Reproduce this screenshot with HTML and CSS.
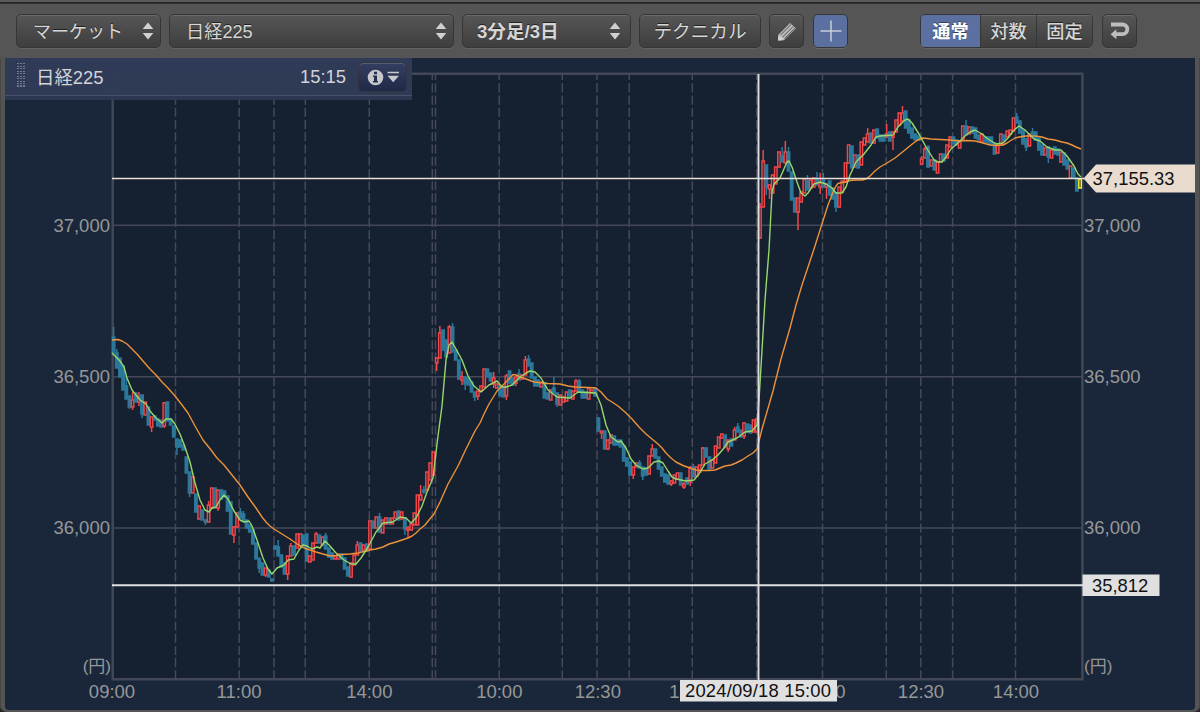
FILE: index.html
```html
<!DOCTYPE html>
<html lang="ja">
<head>
<meta charset="utf-8">
<title>日経225</title>
<link rel="stylesheet" href="styles.css">
</head>
<body>
<div class="window">
  <header class="toolbar">
    <button class="btn select market"><span>マーケット</span><svg class="arrows" width="12" height="18" viewBox="0 0 12 18"><path d="M6 0.5L11.3 7H.7zM.7 11H11.3L6 17.5z"/></svg></button>
    <button class="btn select symbol"><span>日経225</span><svg class="arrows" width="12" height="18" viewBox="0 0 12 18"><path d="M6 0.5L11.3 7H.7zM.7 11H11.3L6 17.5z"/></svg></button>
    <button class="btn select span"><span>3分足/3日</span><svg class="arrows" width="12" height="18" viewBox="0 0 12 18"><path d="M6 0.5L11.3 7H.7zM.7 11H11.3L6 17.5z"/></svg></button>
    <button class="btn technical"><span>テクニカル</span></button>
    <button class="btn square"><svg width="22" height="22" viewBox="0 0 22 22"><path d="M2 20.500L2.600 14.500 14.200 3 20 8.600 8.200 20z" fill="#bcbcbc"/><path d="M4.600 14.900L15.400 4.200M6.700 17L17.400 6.300M8.600 18.600L19 8.200" stroke="#4a4a4a" stroke-width="1"/><path d="M2 20.500l.5-5.200L7.500 20.200z" fill="#d2d2d2"/></svg></button>
    <button class="btn square plus active"><svg width="22" height="22" viewBox="0 0 22 22"><path d="M11 .5V21.500M.5 11H21.500" stroke="#c9cdd6" stroke-width="1.5"/></svg></button>
    <div class="segment"><button class="active"><span>通常</span></button><button><span>対数</span></button><button><span>固定</span></button></div>
    <button class="btn square"><svg width="22" height="22" viewBox="0 0 22 22"><path d="M2 4.500H13.500A4.800 4.800 0 0 1 13.500 14.100H6" fill="none" stroke="#bdbdbd" stroke-width="3.800"/><path d="M1.500 14.300L7.400 9.300V19.300z" fill="#bdbdbd"/></svg></button>
  </header>
  <main class="chart">
    <svg id="plot" class="plot" width="1190" height="652" viewBox="5 58 1190 652">
      <rect x="112" y="73" width="970" height="606" fill="#152130"/>
      <g id="grid" class="grid"></g>
      <path class="frame" d="M112.700 73.700H1082.400V679.200H112.700z"/>
      <g id="candles"></g>
      <path class="ma-long" d="M112 340L118 339.500 122 341 127 344 132 349 137 354 143 361 150 369 156 375 162 382 168 388 175 396 182 405 188 413 195 426 203 440 211 450 217 458 224 465 232 475 240 485 248 497 256 508 262 517 266 522 270 526 274 529 282 534 290 539 297 544 304 548 310 550 316 552 323 554 330 556 336 555.500 342 554.500 350 554 358 553 364 551.500 370 550 376 549 383 547 389 544 396 542 402 540 408 538 412 536 416 533 420 529 425 525 429 520 434 514 437 508 440 502 444 493 448 484 453 475 458 466 466 449 475 431 480 423 484 414 489 404 494 396 497 391 500 388 507 381 513 374.500 516 375 520 377 526 379 534 382 548 383.500 560 384 568 386 575 387 588 387.500 596 388 601 392 607 399 612 402 618 406 625 412 632 419 639 427 646 434 652 439 658 444 662 448 666 453 671 458 676 462 683 465.500 690 468 696 470 703 470.500 709 470.500 715 470 720 468 725 466 731 465 736 463 742 460 748 456 753 453 757 449 759 441 762 429 773 391 781 359 790 328 796 305 802 285 814 249 828 205 833 192 836 186 838 183.500 840 183 845 182 850 180.500 856 180 862 180 866 179 870 176 875 171 880 167 887 163 895 158 900 154 905 150 911 145 917 140.500 920 139 923 138 931 139 940 139.500 950 140 960 141 967 140.500 975 141 983 143 990 145 997 145.500 1003 145 1007 143 1010 141 1015 138 1019 137 1026 136 1035 136 1042 137 1048 139 1055 140 1062 142 1067 143 1072 145 1076 147 1081 149"/>
      <path class="ma-short" d="M112 353L120 361 124 367 127 378 132 390 140 400 146 404 150 411 156 418 162 423 166 419 171 419 175 424 180 434 185 447 190 462 195 483 200 500 205 510 209 512 212 508 216 507 220 500 224 495 228 499 234 511 240 520 244 522 249 521 252 526 257 540 263 558 268 569 272 574 277 568 284 565 288 560 294 559 299 550 303 545 307 546 312 549 317 547 320 548 325 541 330 546 336 553 344 560 351 564 356 564 361 558 368 547 376 532 383 523 393 522 400 517 406 518 411 523 416 518 422 506 427 492 433 478 438 436 442 406 446 360 449 345 452 342 456 349 462 360 468 376 474 386 481 392 489 385 497 381 502 387 506 387 512 385 519 378 526 373 530 371 535 372 541 378 548 390 557 397 570 398 578 392 596 393 601 405 606 425 611 437 618 442 621 441 626 448 631 459 636 465 643 469 648 468 654 462 659 461 663 463 668 471 672 477 676 479 686 481 694 480 699 474 705 464 712 460 718 455 724 448 728 442 737 438 745 432 752 431 757 425 759 400 762 350 765 300 769 250 772 192 774 184 780 178 787 162 789 161 792 167 797 182 801 193 805 196 808 193 814 184 820 182 826 184 832 188 836 193 842 193 846 187 850 175 856 162 864 154 871 145 876 137 880 136 893 135 898 127 905 120 908 119 912 123 919 134 926 147 934 160 938 162 942 162 946 157 951 149 959 142 965 136 970 132 975 130 982 134 988 139 996 144 1003 143 1008 138 1014 130 1019 126 1025 130 1034 139 1040 141 1047 147 1055 150 1061 150 1067 156 1074 166 1078 174 1081 177"/>
      <path class="price-line" d="M112 178.500H1084"/>
      <path class="cursor-line" d="M112 585.300H1083M758.500 74V680"/>
      <g class="axis">
        <g text-anchor="end"><text x="110" y="231.500">37,000</text><text x="110" y="383">36,500</text><text x="110" y="534">36,000</text><text x="111" y="672" class="unit">(円)</text></g>
        <text x="1084" y="231.500">37,000</text><text x="1084" y="383">36,500</text><text x="1084" y="534">36,000</text><text x="1084" y="672" class="unit">(円)</text>
        <g text-anchor="middle"><text x="112" y="698">09:00</text><text x="239" y="698">11:00</text><text x="369.300" y="698">14:00</text><text x="499.300" y="698">10:00</text><text x="597.800" y="698">12:30</text><text x="692.300" y="698">14:00</text><text x="822.500" y="698">10:00</text><text x="921" y="698">12:30</text><text x="1016" y="698">14:00</text></g>
      </g>
      <path d="M1083.500 178.500L1096 164.500H1195V192.500H1096z" fill="#e9dccf"/>
      <text class="tag-text" x="1092.500" y="185" textLength="82">37,155.33</text>
      <path d="M1082.500 574.500H1159.500V596H1082.500z" fill="#e0e0e0"/>
      <text class="tag-text" x="1092" y="591.500">35,812</text>
      <path d="M680 680H837V701.500H680z" fill="#e0e0e0"/>
      <text class="tag-text" x="685" y="696.700" textLength="146">2024/09/18 15:00</text>
    </svg>
    <div class="legend">
      <i class="grip"></i><span class="name">日経225</span><time>15:15</time>
      <button class="info"><svg width="36" height="18" viewBox="0 0 36 18"><circle cx="10.500" cy="9.500" r="7.800" fill="#c5c7cd"/><path d="M9 3.700h3v2.600h-3zM8 7.500h4v5.500h1v1.500h-5v-1.500h1V9h-1z" fill="#252e4b"/><path d="M22.500 3.700H34V5.200H22.500zM22.500 7.700H34L28.200 14.200z" fill="#c5c7cd"/></svg></button>
    </div>
  </main>
</div>
<script src="chart.js"></script>
</body>
</html>
```
FILE: styles.css
```css
* { box-sizing: border-box; }
body { margin: 0; overflow: hidden; background: #242424; font-family: "Liberation Sans", "Noto Sans CJK JP", sans-serif; }
button { font: inherit; color: inherit; margin: 0; padding: 0; border: 0; }
.window { width: 1200px; height: 712px; padding-bottom: 2px; display: flex; flex-direction: column; background: #545455; border-radius: 0 0 7px 7px; box-shadow: inset 1px 0 #484848, inset -1px 0 #484848; }
.toolbar { height: 58px; display: flex; align-items: flex-start; gap: 8px; padding: 14px 63px 0 16px; background: linear-gradient(#5a5a5a 0 1.5px, #252525 2px 3.300px, #555 4px); color: #d6d6d6; font-size: 18.200px; text-shadow: 0 -1px #222; }
.btn { height: 34px; border: 1.500px solid #363636; border-radius: 5px; background: linear-gradient(#565656, #3e3e3e); box-shadow: inset 0 1px #696969, 0 1px #626262; display: flex; align-items: center; justify-content: center; text-shadow: inherit; white-space: nowrap; }
.btn > span, .segment span { display: block; padding-bottom: 3px; }
.select { justify-content: space-between; padding: 0 6px 0 16px; }
.arrows { fill: #d0d0d0; }
.market { width: 145px; font-size: 18px; }
.symbol { width: 285px; }
.span { width: 169px; padding: 0 9px 0 14px; font-weight: bold; font-size: 18.600px; }
.technical { width: 122px; font-size: 18.600px; }
.square { width: 35px; }
.btn.active, .segment .active { background: #5b70a1; color: #fff; box-shadow: 0 1px #686868; }
.plus { margin-left: 1px; }
.segment { display: flex; width: 173px; height: 34px; margin: 0 1px 0 auto; border: 1.500px solid #363636; border-radius: 5px; overflow: hidden; box-shadow: 0 1px #626262; }
.segment button { flex: 1; background: linear-gradient(#565656, #3e3e3e); border-left: 1px solid #363636; box-shadow: inset 0 1px #696969; text-shadow: inherit; font-weight: 500; }
.segment .active { flex: 0 0 59px; border-left: 0; font-weight: bold; text-shadow: 0 -1px #33415f; }
.chart { position: relative; width: 1190px; height: 652px; margin: 0 auto; background: #1a273a; border-radius: 0 0 4px 4px; overflow: hidden; }
.plot { display: block; }
.grid { stroke: #454957; fill: none; stroke-width: 1.500; }
.dash { stroke-dasharray: 9.100 3.130; }
.frame { fill: none; stroke: #434856; stroke-width: 2.400; }
.up, .down, .last { stroke-width: 1.500; }
.up { stroke: #f0474a; fill: #152130; }
.down { stroke: #2b789b; fill: #2b789b; }
.last { stroke: #f4ed21; fill: #152130; }
.ma-long, .ma-short { fill: none; stroke-width: 1.400; stroke-linejoin: round; }
.ma-long { stroke: #ed913a; }
.ma-short { stroke: #98d86b; }
.price-line { stroke: #e9e0d5; stroke-width: 1.700; }
.cursor-line { stroke: #dedfe1; stroke-width: 1.900; fill: none; }
.axis { fill: #969798; font-size: 18.500px; }
.unit { font-size: 17px; }
.tag-text { fill: #111; font-size: 18.400px; }
.legend { position: absolute; left: 0; top: 0; width: 407px; height: 42px; padding: 0 5px 4px 12px; display: flex; align-items: center; color: #d2d4d9; font-size: 18.400px; background: linear-gradient(rgba(48,59,87,.97) 0 36.500px, #4a5166 37px 38.200px, rgba(45,56,84,.95) 38.500px); }
.legend .name { padding-bottom: 3px; }
.grip { width: 8px; height: 25px; margin-right: 11px; margin-bottom: 3px; background: repeating-linear-gradient(90deg, transparent 0 2px, #303a55 2px 3px), repeating-linear-gradient(#747b8e 0 1px, #303a55 1px 2.500px); }
.legend time { margin-left: auto; }
.info { width: 49px; height: 30px; margin: 0 0 1px 12px; border: 1.500px solid #33343d; border-radius: 5px; background: linear-gradient(#343e61, #202947); box-shadow: inset 0 1px #565d76; display: flex; align-items: center; justify-content: center; }
```
FILE: chart.js
```js
const NS = 'http://www.w3.org/2000/svg';
function add(parent, d, cls) {
  const p = document.createElementNS(NS, 'path');
  p.setAttribute('d', d);
  p.setAttribute('class', cls);
  parent.appendChild(p);
}
const grid = document.getElementById('grid');
[225.3, 376.7, 528].forEach(y => add(grid, `M113 ${y}H1082`, ''));
[175.5, 239.2, 274, 305.3, 369.3, 432.3, 435.5, 499.2, 562.3, 597, 629.2, 692.3, 756.7, 822.5, 886.3, 920.8, 952.6, 1015.5]
  .forEach(x => { add(grid, `M${x} 74V80`, ''); add(grid, `M${x} 83.3V679`, 'dash'); });

// Each session: first x, then bars as "direction top bottom [high low]".
const sessions = [
  [113.6, `d 337 353 327 353|d 353 368 349 368|d 358 377|d 366 390|d 386 399 376 399|d 396 407 396 409|u 400 407 392 410|d 393 402|u 397 402 392 406|d 395 414 395 418|u 402 415|d 407 425|u 417 427 417 432|d 416 420|d 419 426|d 420 427|u 403 426 402 428|d 402 421|d 419 425|d 426 437|d 439 447 439 455|d 440 447|d 445 450|d 457 473|d 472 493 472 497|u 477 493|d 494 512|u 506 519|d 510 520|d 520 522 519 525|u 505 522 501 522|u 488 508|d 488 508|u 490 508 490 511|d 490 499|d 491 497|d 496 511|d 502 534|u 527 535 526 543|u 513 527|d 512 518 508 518|d 514 521 511 521|d 520 528|d 525 532|d 530 544|d 543 559|d 559 568 557 573|d 563 575|u 568 575 568 577|d 570 577|d 579 581`],
  [275, `d 546 549|d 547 556 540 556|d 555 567|d 563 574|u 556 574 556 580|u 546 556 543 556|d 546 555|u 534 548|u 534 546|d 535 546|d 534 561|u 556 562|u 543 560|u 534 543 532 543|d 535 543|u 537 545|d 536 549 533 549|d 548 557|d 553 559|u 556 559|u 554 559|d 554 559|d 558 569|d 567 576|u 563 577|u 555 565|u 545 555 541 555|d 543 551|u 545 550|d 544 551|u 521 549|d 521 528|u 517 528|d 517 532 513 532|u 520 533|u 518 524|d 518 524|u 518 524|u 512 518|d 511 520|u 512 519|d 518 529 518 535|u 528 530 526 538|u 524 530|u 513 525|u 495 525|u 495 500 485 500|d 490 492 486 494|u 472 490|u 463 480|u 452 475`],
  [436.7, `u 358 363 357 371|u 333 358 326 358|d 330 350|d 340 357|u 327 353 325 353|d 327 352 323 352|d 350 360|d 360 379|u 377 380 371 385|d 377 384 377 390|d 378 385|d 382 392|d 392 397 392 401|u 391 396 391 400|u 386 391|u 369 387|d 369 377|d 373 381|u 378 384 372 388|u 384 388|d 386 395 386 397|d 387 397|u 376 396 374 400|d 371 383|d 378 385|u 377 383 377 386|d 374 380 369 380|u 375 379|u 360 375 356 375|d 359 366 355 366|d 363 378|d 377 386|d 380 386|u 382 387|d 383 398|d 393 399|u 390 400|d 388 393 377 393|d 393 404 393 407|u 395 405|u 397 402|u 392 401|d 390 398|u 391 399|u 381 391 379 391|d 381 392 379 392|d 390 398|d 392 398|u 388 399|u 390 393|d 388 396`],
  [598.4, `d 418 431|u 431 433 431 439|d 431 449|u 440 449|u 435 443|d 436 445|d 440 445|d 440 447|d 446 461|d 458 466|d 462 475|u 467 475 467 479|u 463 467|d 463 468 460 468|d 467 476 467 480|d 468 475|u 456 474|u 449 456 444 456|d 449 458|d 457 469|d 467 476|d 474 482|d 475 484|u 481 484 480 486|u 475 483|u 473 479|d 473 485|u 484 487 482 489|d 478 484|u 468 482 466 486|d 467 477 464 477|u 467 476|u 465 472|u 448 465 447 465|d 448 457|d 457 469|u 460 468|u 446 463|u 437 448|u 434 438|d 435 447|u 440 449 440 452|d 439 446|u 430 440 427 440|d 427 432 423 432|d 430 437|u 423 436 423 439|d 424 432|d 425 433|u 420 432|u 419 432`],
  [760, `u 207 238 203 238|u 161 207 150 207|d 165 187 165 195|u 185 189 184 199|u 175 193|u 167 184|u 152 167|d 156 162 147 162|u 152 163 141 163|d 152 171 147 171|d 172 200|d 198 212|u 198 212 198 230|u 192 202|u 179 193|d 181 190 175 190|u 180 188|u 178 187|d 179 185 172 185|u 183 187 173 194|d 180 187 173 187|u 184 187 184 199|d 181 195|d 188 199|d 193 207 193 212|u 187 207|u 181 192|u 163 182|u 145 163|d 146 168|u 155 167|d 155 168|u 142 165|u 138 145|u 134 142 128 142|d 133 143|u 130 143|d 129 138|d 135 141|d 135 141|u 134 137 124 137|d 132 141|u 132 137 132 150|u 120 132|u 113 125|u 113 121 106 121|d 111 128|d 120 133|d 128 138|d 134 140|d 136 140`],
  [921.7, `u 159 164 156 165|u 149 158 147 158|d 147 167 145 167|u 160 166|d 160 170|u 162 173|u 154 162|d 154 161|u 145 158|u 137 147|d 137 144|d 140 145|u 141 148|u 126 140|d 126 135 120 135|u 127 134|d 127 133|d 128 138|d 135 140|u 134 142|d 137 142|d 137 143|d 137 145|d 143 154|u 145 153|u 134 145|d 135 141|u 131 137|u 130 134|u 118 131|d 117 123 113 123|d 121 133|d 130 144|d 139 147 138 151|u 134 146|d 132 137 128 137|d 132 140|d 138 150|d 145 155|u 148 155|d 147 157 147 163|u 150 158|d 147 154|d 149 155|u 152 162|d 153 165|d 160 169|u 166 178|d 168 178|d 178 191|y 179 188`]
];
const kinds = { u: 'up', d: 'down', y: 'last' };
const layer = document.getElementById('candles');
for (const [start, bars] of sessions) {
  bars.split('|').forEach((bar, i) => {
    const [kind, ...n] = bar.split(' ');
    const [top, bottom, high = top, low = bottom] = n.map(Number);
    const x = +(start + i * 3.167).toFixed(2);
    add(layer, `M${x} ${high}V${top}M${x} ${bottom}V${low}M${x - 1.2} ${top}h2.4V${bottom}h-2.4z`, kinds[kind]);
  });
}
```
